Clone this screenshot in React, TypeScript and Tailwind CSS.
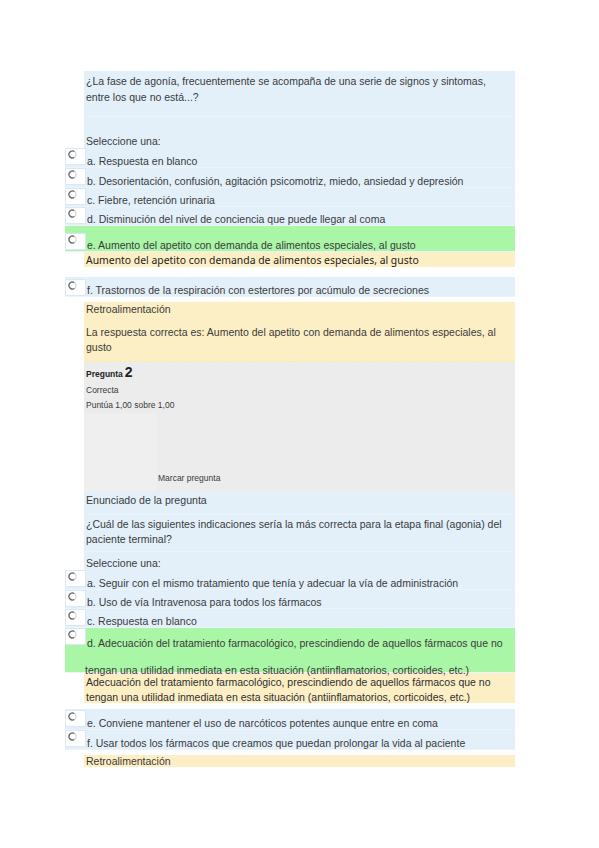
import type { ReactNode } from "react";

const BLUE = "bg-[#e3f0fa]";

function Radio() {
  return (
    <svg width="9" height="9" viewBox="0 0 9 9" className="block">
      <circle cx="4.5" cy="4.5" r="3.5" fill="#fff" stroke="#d4d4d4" strokeWidth="1.2" />
      <path d="M6.25 1.47 A3.5 3.5 0 1 0 6.25 7.53" fill="none" stroke="#6a6a6a" strokeWidth="1.2" />
    </svg>
  );
}

interface OptionProps {
  label: string;
  height: string;
  tone?: "blue" | "green";
  boxTop?: string;
  children?: ReactNode;
}

function Option({ label, height, tone = "blue", boxTop = "mt-0", children }: OptionProps) {
  const bg = tone === "green" ? "bg-[#a9f6a6]" : BLUE;
  return (
    <div className={`flex ${height} ${bg} border-b border-[#ebf4fb]`}>
      <div className={`${boxTop} flex h-[17px] w-[21px] shrink-0 items-start border border-[#d9e8f4] bg-white pl-[2px] pt-[1px]`}>
        <Radio />
      </div>
      {children ?? (
        <div className="flex flex-1 items-end whitespace-nowrap pb-[1px] pl-[1px] text-[10.5px] leading-[10px] text-[#3a3a3a]">
          {label}
        </div>
      )}
    </div>
  );
}

export default function App() {
  return (
    <div className="min-h-[848px] bg-white font-['Liberation_Sans',Arial,sans-serif]">
      <div className="w-[515px] pl-[65px] pt-[71px]">
        {/* question 1 */}
        <div className={`ml-[19px] h-[77px] ${BLUE} px-[2px] text-[10.5px] leading-4 text-[#3a3a3a]`}>
          <div className="h-[46px] border-b border-[#ebf4fb] pt-[2px]">
            <p>¿La fase de agonía, frecuentemente se acompaña de una serie de signos y sintomas,</p>
            <p>entre los que no está...?</p>
          </div>
          <p className="mt-[16px]">Seleccione una:</p>
        </div>

        <Option height="h-[20px]" label="a. Respuesta en blanco" />
        <Option height="h-[19.5px]" label="b. Desorientación, confusión, agitación psicomotriz, miedo, ansiedad y depresión" />
        <Option height="h-[19.5px]" label="c. Fiebre, retención urinaria" />
        <Option height="h-[19px]" label="d. Disminución del nivel de conciencia que puede llegar al coma" />
        <Option
          height="h-[26px]"
          tone="green"
          boxTop="mt-[7px]"
          label="e. Aumento del apetito con demanda de alimentos especiales, al gusto"
        />
        <div className="ml-[19px] h-[15px] whitespace-nowrap bg-[#fdefc5] px-[2px] font-['Noto_Sans',sans-serif] text-[10.4px] leading-[16px] text-[#222]">
          Aumento del apetito con demanda de alimentos especiales, al gusto
        </div>

        <div className="mt-[10px]">
          <Option
            height="h-[20px]"
            boxTop="mt-[2px]"
            label="f. Trastornos de la respiración con estertores por acúmulo de secreciones"
          />
        </div>

        <div className="ml-[19px] mt-[5px] h-[60px] border-b border-dashed border-[#f8e8b4] bg-[#fdefc5] px-[2px] text-[10.5px] leading-[15px] text-[#3a3a3a]">
          <p className="pt-0">Retroalimentación</p>
          <p className="mt-[8px]">La respuesta correcta es: Aumento del apetito con demanda de alimentos especiales, al</p>
          <p>gusto</p>
        </div>

        {/* question 2 info */}
        <div className="ml-[19px] flex h-[130px] flex-col bg-[#ececec] text-[8.5px] text-[#3a3a3a]">
          <div className="px-[2px] pt-[3px]">
            <p className="flex items-baseline gap-[2px] leading-[14px]">
              <span className="font-bold text-[#222]">Pregunta</span>
              <span className="text-[14px] font-bold text-[#222]">2</span>
            </p>
            <p className="mt-[3px] leading-[12px]">Correcta</p>
            <p className="mt-[3px] leading-[12px]">Puntúa 1,00 sobre 1,00</p>
          </div>
          <div className="mt-[2px] flex flex-1">
            <div className="w-[73px] bg-[#efefef]" />
            <div className="flex flex-1 items-end pb-[8px] pl-[1px] leading-[12px]">Marcar pregunta</div>
          </div>
        </div>

        {/* question 2 */}
        <div className={`ml-[19px] h-[78px] ${BLUE} px-[2px] text-[10.5px] text-[#3a3a3a]`}>
          <div className="h-[23px] border-b border-[#ebf4fb] pt-[1px] text-[10.6px] leading-[14px]">
            Enunciado de la pregunta
          </div>
          <div className="h-[37px] border-b border-[#ebf4fb] pt-[2px] leading-[15px]">
            <p>¿Cuál de las siguientes indicaciones sería la más correcta para la etapa final (agonia) del</p>
            <p>paciente terminal?</p>
          </div>
          <p className="pt-[3px] leading-[16px]">Seleccione una:</p>
        </div>

        <Option height="h-[19.5px]" label="a. Seguir con el mismo tratamiento que tenía y adecuar la vía de administración" />
        <Option height="h-[19.5px]" label="b. Uso de vía Intravenosa para todos los fármacos" />
        <Option height="h-[19px]" label="c. Respuesta en blanco" />
        <Option height="h-[45px]" tone="green" label="">
          <div className="flex-1 whitespace-nowrap pl-[1px] text-[10.5px] leading-[14px] text-[#3a3a3a]">
            <p className="mt-[8px]">d. Adecuación del tratamiento farmacológico, prescindiendo de aquellos fármacos que no</p>
            <p className="-ml-[2px] mt-[13px]">tengan una utilidad inmediata en esta situación (antiinflamatorios, corticoides, etc.)</p>
          </div>
        </Option>
        <div className="ml-[19px] h-[30px] whitespace-nowrap bg-[#fdefc5] px-[2px] pt-[2px] text-[10.5px] leading-[15px] text-[#2e2e2e]">
          <p>Adecuación del tratamiento farmacológico, prescindiendo de aquellos fármacos que no</p>
          <p>tengan una utilidad inmediata en esta situación (antiinflamatorios, corticoides, etc.)</p>
        </div>

        <div className="mt-[6px]">
          <Option height="h-[21px]" boxTop="mt-[1px]" label="e. Conviene mantener el uso de narcóticos potentes aunque entre en coma" />
          <Option height="h-[20px]" label="f. Usar todos los fármacos que creamos que puedan prolongar la vida al paciente" />
        </div>

        <div className="ml-[19px] mt-[5px] h-[12px] bg-[#fdefc5] px-[2px] text-[10.5px] leading-[13px] text-[#3a3a3a]">
          Retroalimentación
        </div>
      </div>
    </div>
  );
}
